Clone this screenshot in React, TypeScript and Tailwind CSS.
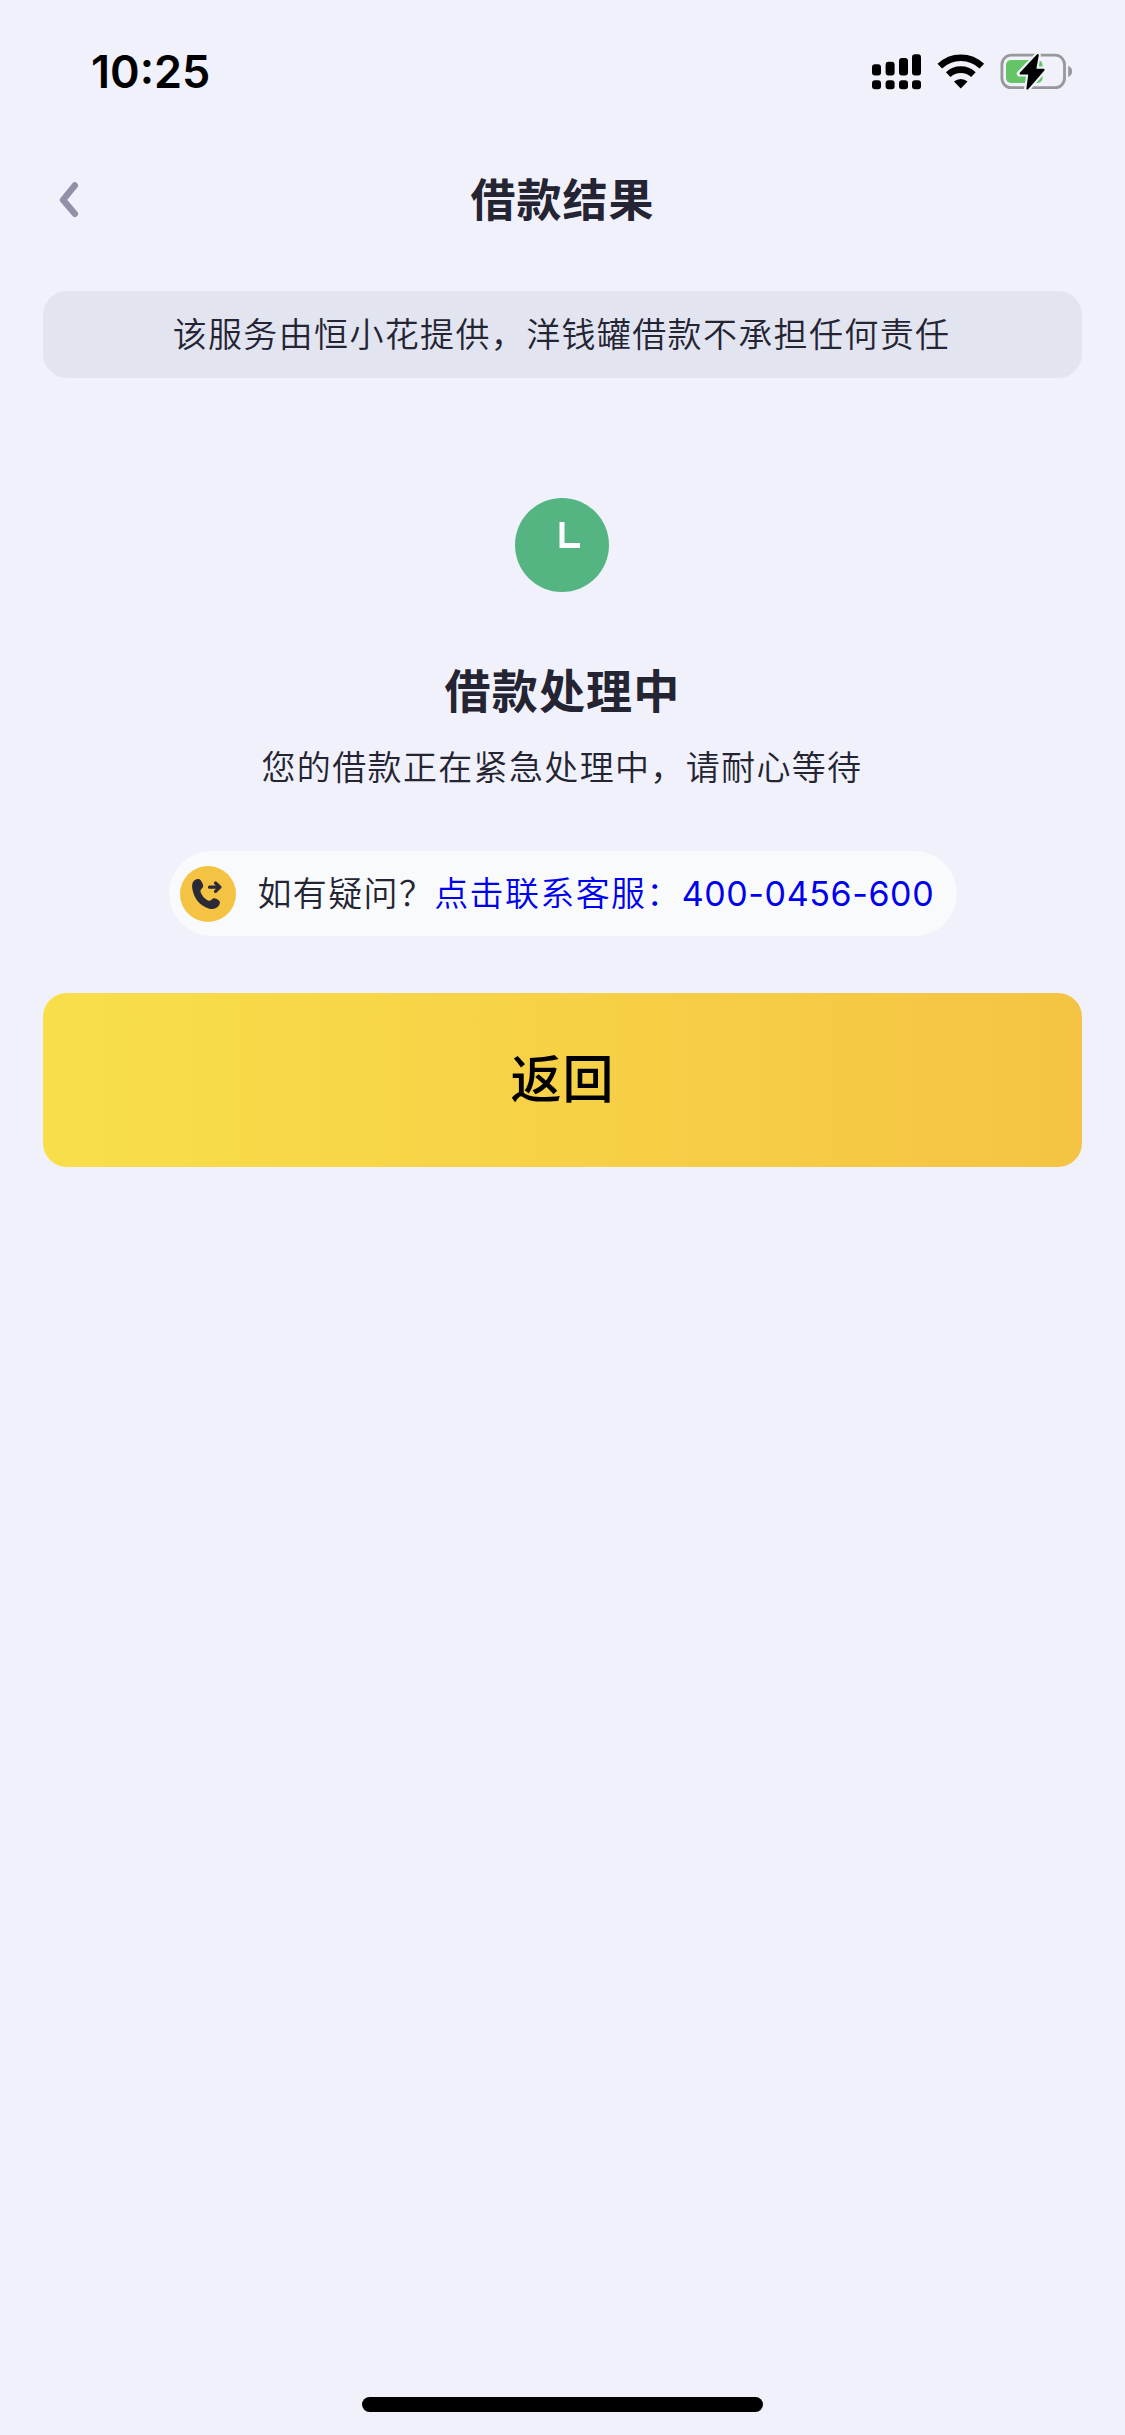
function SignalIcon() {
  return (
    <svg width="49" height="36" viewBox="0 0 49 36" fill="#000">
      <rect x="0" y="10.3" width="9" height="11.2" rx="3" />
      <rect x="13.6" y="7.8" width="9" height="13.7" rx="3" />
      <rect x="27" y="4" width="9" height="17.5" rx="3" />
      <rect x="40" y="0.3" width="9" height="21.2" rx="3" />
      <rect x="0" y="26.3" width="9" height="9" rx="3" />
      <rect x="13.6" y="26.3" width="9" height="9" rx="3" />
      <rect x="27" y="26.3" width="9" height="9" rx="3" />
      <rect x="40" y="26.3" width="9" height="9" rx="3" />
    </svg>
  )
}

function WifiIcon() {
  return (
    <svg width="48" height="36" viewBox="0 0 48 36" fill="none" stroke="#000" strokeWidth="6.6">
      <path d="M2.8 12.2a30.2 30.2 0 0 1 42 0" />
      <path d="M11.2 20.7a18.3 18.3 0 0 1 25.2 0" />
      <path d="M23.8 34.6 17 27.6a10 10 0 0 1 13.6 0Z" fill="#000" stroke="none" />
    </svg>
  )
}

function BatteryIcon() {
  return (
    <svg width="74" height="40" viewBox="0 0 74 40" fill="none">
      <rect x="1.9" y="4.1" width="62.6" height="32.6" rx="9.5" stroke="#97979c" strokeWidth="2.8" />
      <path d="M68.2 14.8c5.2 1.6 5.2 9.6 0 11.2Z" fill="#97979c" />
      <rect x="6" y="9" width="36.5" height="23" rx="5" fill="#65c466" />
      <path
        d="M37.8 4 19.8 22.6h9.6L27 38l17.2-19.6h-9Z"
        fill="#000"
        stroke="#f0f1fa"
        strokeWidth="6"
        strokeLinejoin="round"
      />
      <path
        d="M37.8 4 20.6 22.4h8.8L27.4 37.6l16.2-18.8h-8.4Z"
        fill="#000"
        stroke="#000"
        strokeWidth="2"
        strokeLinejoin="round"
      />
    </svg>
  )
}

function PhoneIcon() {
  return (
    <svg className="shrink-0" width="56" height="56" viewBox="0 0 56 56">
      <circle cx="28" cy="28" r="28" fill="#f5c343" />
      <path
        d="M14.2 14.6c1.6-1.5 5-2.3 6.5-.3l2 3.5c1 2 .6 3.6-.8 4.8-1.5 1.4-1.8 2.5-1 4.3 1.6 3.4 3.8 5.8 7 7.5 1.5.8 2.6.4 3.8-.9 1.3-1.4 2.8-1.8 4.6-.8l2.4 1.5c1.8 1.3 1.4 4-.2 5.9-2.3 2.9-6.2 3.7-9.8 2.4C19.6 39.3 14.5 33 12.7 24.5c-.9-4.4-.9-7.6 1.5-9.9Z"
        fill="#2b2b38"
      />
      <path
        d="M29.5 21.2H39M35.5 17l4.5 4.2-4.5 4.2"
        fill="none"
        stroke="#2b2b38"
        strokeWidth="3.2"
        strokeLinecap="round"
        strokeLinejoin="round"
      />
    </svg>
  )
}

function StatusBar() {
  return (
    <div className="flex h-[132px] items-start justify-between pr-[51px] pl-[91px]">
      <span className="mt-[45px] font-['Inter'] text-[45px] leading-[54px] font-semibold text-black">10:25</span>
      <div className="mt-[54px] flex items-start">
        <SignalIcon />
        <div className="ml-4">
          <WifiIcon />
        </div>
        <div className="-mt-[3px] ml-[15px]">
          <BatteryIcon />
        </div>
      </div>
    </div>
  )
}

function Header() {
  return (
    <header className="flex h-[136px] items-center px-[59px]">
      <button className="w-[20px]" aria-label="返回">
        <svg width="20" height="36" viewBox="0 0 20 36" fill="none">
          <path
            d="M15.8 3.4 4 17.9l11.8 13.9"
            stroke="#9190a8"
            strokeWidth="6.4"
            strokeLinecap="round"
            strokeLinejoin="round"
          />
        </svg>
      </button>
      <h1 className="flex-1 pt-[2px] pr-[20px] text-center text-[45px] font-bold tracking-[1px]">借款结果</h1>
    </header>
  )
}

export default function App() {
  return (
    <div className="flex h-[2435px] w-[1125px] flex-col bg-[#f0f1fa] font-['Inter','Noto_Sans_CJK_SC',sans-serif] text-[#242433]">
      <StatusBar />
      <Header />

      <main className="flex flex-1 flex-col items-center px-[43px] pt-[23px]">
        <div className="flex h-[87px] w-full items-center justify-center rounded-[24px] bg-[#e2e4f0] pr-[2px] text-[34px] font-[350] tracking-[1.35px]">
          该服务由恒小花提供，洋钱罐借款不承担任何责任
        </div>

        <svg className="mt-[120px] mr-px" width="94" height="94" viewBox="0 0 94 94">
          <circle cx="47" cy="47" r="47" fill="#54b482" />
          <path d="M47 24v23.5h18" fill="none" stroke="#fff" strokeWidth="5" />
        </svg>

        <h2 className="mt-[65px] text-[46px] leading-[68px] font-bold tracking-[1.2px]">借款处理中</h2>
        <p className="mt-[17px] pr-px text-[34px] leading-[52px] font-[350] tracking-[1.35px]">
          您的借款正在紧急处理中，请耐心等待
        </p>

        <div className="mt-[57px] flex h-[85px] w-[788px] items-center rounded-full bg-[#f9fafc] pl-[11px] text-[34px] font-[350]">
          <PhoneIcon />
          <span className="ml-[22px] tracking-[1.35px] whitespace-nowrap">
            如有疑问？
            <a className="text-[#0000ee]" href="tel:400-0456-600">
              点击联系客服：<span className="font-normal tracking-[0.6px]">400-0456-600</span>
            </a>
          </span>
        </div>

        <button className="mt-[57px] h-[174px] w-full rounded-[24px] bg-linear-to-r from-[#f8df4a] to-[#f5c343] text-[51px] font-medium tracking-[1px] text-black">
          返回
        </button>
      </main>

      <div className="mx-auto mb-[23px] h-[15px] w-[401px] rounded-full bg-black" />
    </div>
  )
}
